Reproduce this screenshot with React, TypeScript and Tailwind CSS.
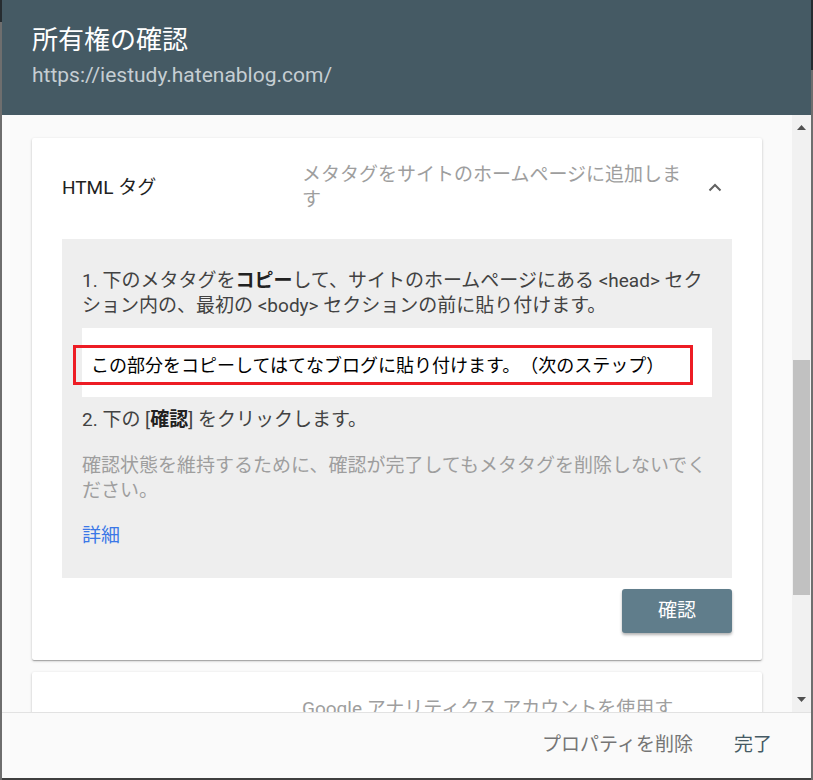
import React from 'react';

export default function App() {
  return (
    <div className="flex h-[780px] w-[813px] bg-[#3f3f3f] font-['Roboto','Noto_Sans_CJK_JP',sans-serif] [text-spacing-trim:space-all]">
      <div className="flex w-[2px] flex-col">
        <div className="h-[22px] bg-[#262c30]" />
        <div className="flex-1 bg-[#6e6e6e]" />
      </div>

      <div className="flex h-[778px] w-[809px] flex-col overflow-hidden bg-[#fafafa]">
        {/* header */}
        <div className="h-[115px] shrink-0 bg-[#455a64] px-[30px] pt-[22px]">
          <h1 className="text-[26px] leading-[36px] text-white">所有権の確認</h1>
          <p className="mt-[5px] text-[21px] leading-[24px] text-[#c5ced3]">https://iestudy.hatenablog.com/</p>
        </div>

        {/* body */}
        <div className="flex min-h-0 flex-1">
          <div className="flex-1 overflow-hidden px-[30px] pt-[23px]">
            <div className="rounded-[2px] bg-white shadow-[0_1px_3px_rgba(0,0,0,0.2),0_1px_1px_rgba(0,0,0,0.14),0_2px_1px_-1px_rgba(0,0,0,0.12)]">
              <div className="flex items-center pb-[27px] pl-[30px] pr-[35px] pt-[24px]">
                <div className="w-[240px] text-[19px] leading-[25px] text-[#212121]">HTML タグ</div>
                <div className="w-[385px] text-[19px] leading-[25px] text-[#9e9e9e]">
                  メタタグをサイトのホームページに追加します
                </div>
                <div className="ml-auto flex h-[24px] w-[24px] items-center justify-center">
                  <svg width="14" height="9" viewBox="0 0 14 9" fill="none">
                    <polyline points="1.5,7.5 7,2 12.5,7.5" stroke="#616161" strokeWidth="2" />
                  </svg>
                </div>
              </div>

              <div className="mx-[30px] bg-[#eeeeee] px-[20px] pb-[30px] pt-[29px] text-[19px] leading-[25px] text-[#424242]">
                <p>
                  1. 下のメタタグを<b className="text-[#212121]">コピー</b>して、サイトのホームページにある &lt;head&gt; セクション内の、最初の &lt;body&gt; セクションの前に貼り付けます。
                </p>
                <div className="relative mt-[10px] h-[69px] bg-white">
                  <div className="absolute left-[-9px] top-[17px] flex h-[40px] w-[620px] items-center border-[3px] border-[#ed1c24] pl-[15px] text-[18px] text-black">
                    この部分をコピーしてはてなブログに貼り付けます。（次のステップ）
                  </div>
                </div>
                <p className="mt-[10px]">
                  2. 下の [<b className="text-[#212121]">確認</b>] をクリックします。
                </p>
                <p className="mt-[21px] text-[#9e9e9e]">
                  確認状態を維持するために、確認が完了してもメタタグを削除しないでください。
                </p>
                <p className="mt-[20px]">
                  <a className="text-[#3b78e7]">詳細</a>
                </p>
              </div>

              <div className="flex justify-end px-[30px] pb-[27px] pt-[11px]">
                <button className="h-[44px] w-[110px] rounded-[3px] bg-[#607d8b] text-[19px] text-white shadow-[0_2px_3px_rgba(0,0,0,0.3)]">
                  確認
                </button>
              </div>
            </div>

            <div className="mt-[12px] h-[200px] rounded-[2px] bg-white shadow-[0_1px_3px_rgba(0,0,0,0.2),0_1px_1px_rgba(0,0,0,0.14)]">
              <div className="flex py-[24px] pl-[270px]">
                <div className="w-[385px] text-[19px] leading-[25px] text-[#9e9e9e]">
                  Google アナリティクス アカウントを使用する
                </div>
              </div>
            </div>
          </div>

          {/* scrollbar */}
          <div className="flex w-[19px] flex-col bg-[#f1f1f1]">
            <div className="flex h-[24px] items-center justify-center">
              <svg width="9" height="5" viewBox="0 0 9 5">
                <polygon points="0,5 4.5,0 9,5" fill="#505050" />
              </svg>
            </div>
            <div className="flex-1 px-[1px]">
              <div className="mt-[221px] h-[235px] bg-[#c1c1c1]" />
            </div>
            <div className="flex h-[25px] items-center justify-center">
              <svg width="9" height="5" viewBox="0 0 9 5">
                <polygon points="0,0 9,0 4.5,5" fill="#505050" />
              </svg>
            </div>
          </div>
        </div>

        {/* footer */}
        <div className="flex h-[66px] shrink-0 items-center justify-end gap-[41px] border-t border-[#e2e2e2] bg-[#fafafa] pr-[39px] text-[19px]">
          <button className="text-[#757575]">プロパティを削除</button>
          <button className="text-[#455a64]">完了</button>
        </div>
      </div>

      <div className="flex w-[2px] flex-col">
        <div className="h-[70px] bg-[#262c30]" />
        <div className="flex-1 bg-[#6e6e6e]" />
      </div>
    </div>
  );
}
